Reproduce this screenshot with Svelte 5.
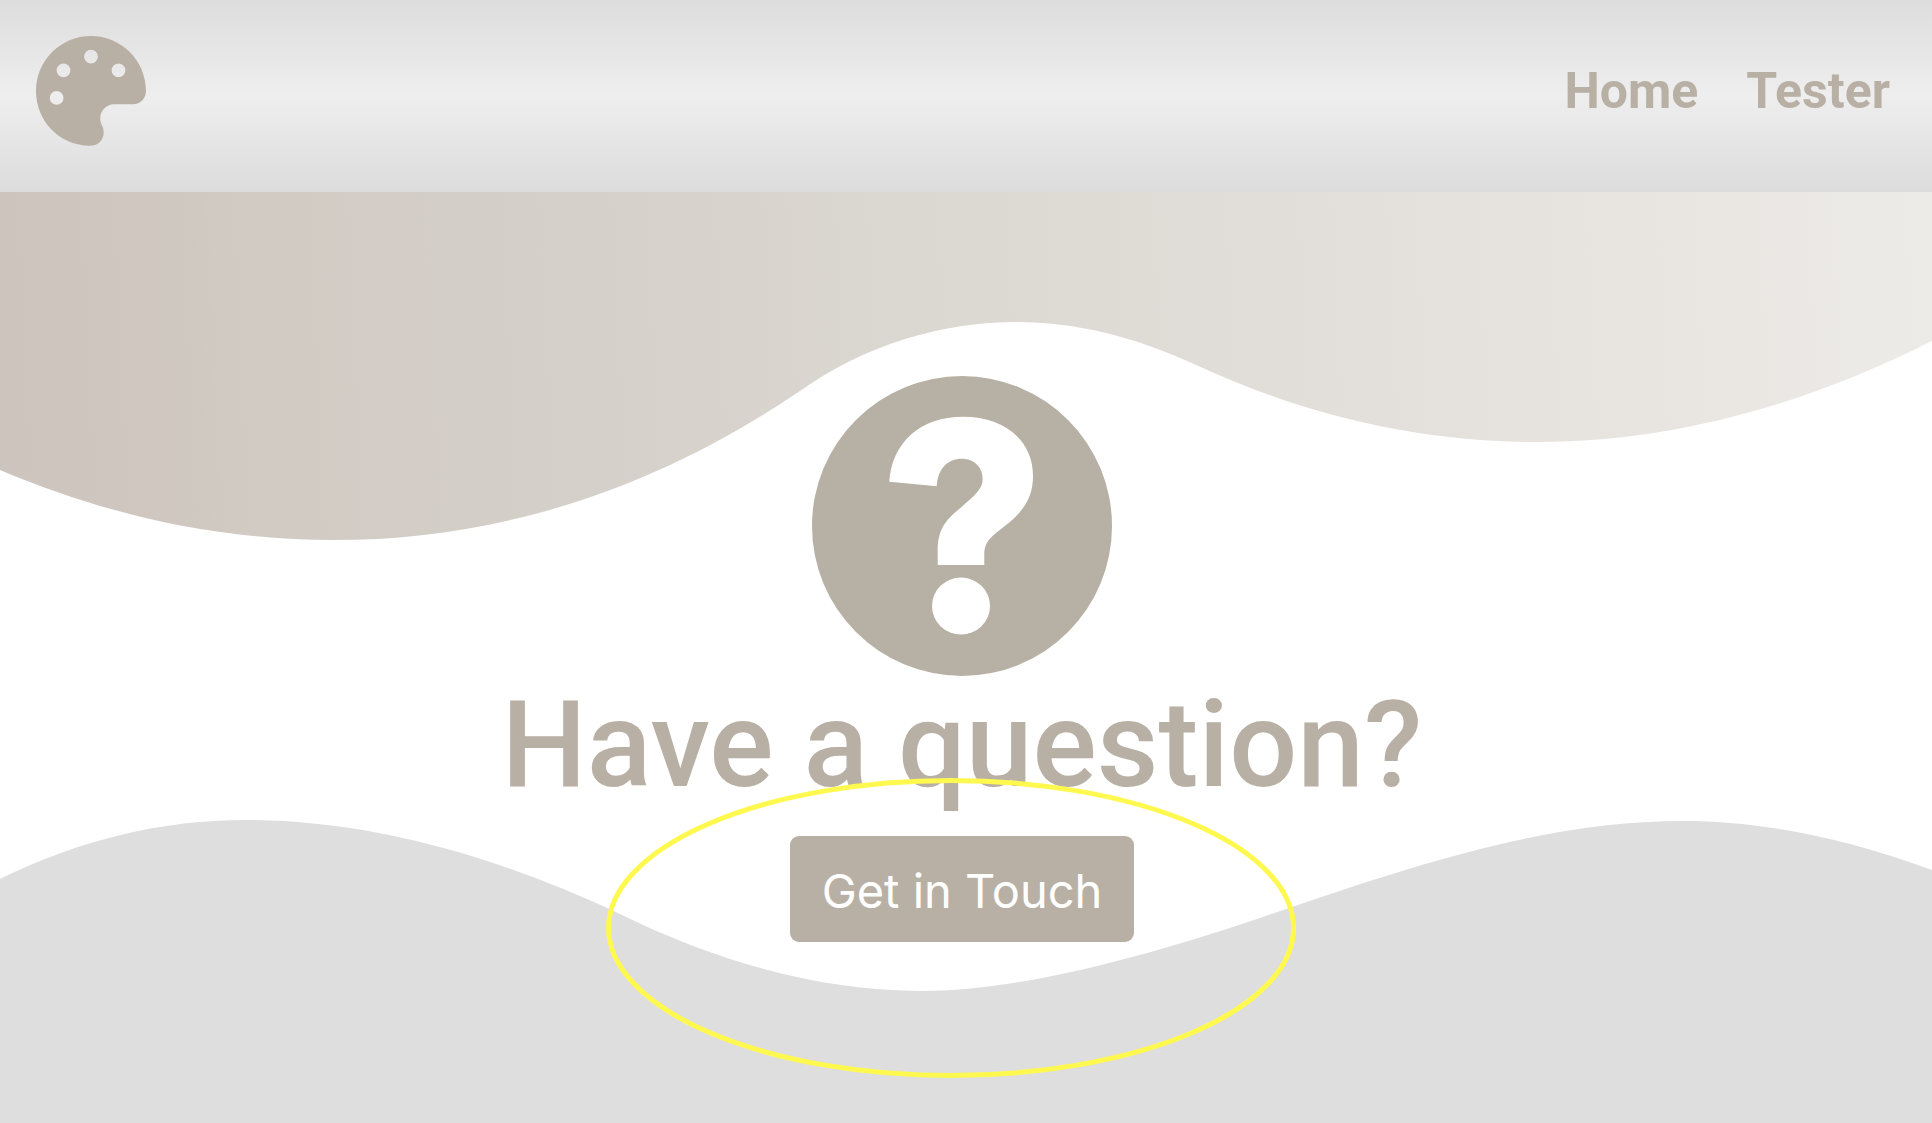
<script>
  const links = ['Home', 'Tester'];
</script>

<div class="page">
  <header>
    <a class="logo" href="#home" aria-label="Home page">
      <svg viewBox="0 0 512 512" aria-hidden="true">
        <path fill="currentColor" d="M512 256C512 290 486 318 452 318H363C327 318 299 348 299 384C299 396 302 406 307 417C312 427 315 437 315 448C315 484 289 511 254 511H244C108 506 0 396 0 256C0 114.6 114.6 0 256 0S512 114.6 512 256zM128 288a32 32 0 1 0 -64 0 32 32 0 1 0 64 0zm0-96a32 32 0 1 0 0-64 32 32 0 1 0 0 64zM288 96a32 32 0 1 0 -64 0 32 32 0 1 0 64 0zm96 96a32 32 0 1 0 0-64 32 32 0 1 0 0 64z" />
      </svg>
    </a>
    <nav>
      {#each links as link}
        <a href="#{link.toLowerCase()}">{link}</a>
      {/each}
    </nav>
  </header>

  <main>
    <svg class="waves" viewBox="0 192 1932 931" preserveAspectRatio="none" aria-hidden="true">
      <defs>
        <linearGradient id="sand" gradientUnits="userSpaceOnUse" x1="0" y1="192" x2="1930" y2="100">
          <stop offset="0" stop-color="#cdc4bd" />
          <stop offset="0.08" stop-color="#cfc7c0" />
          <stop offset="0.11" stop-color="#d0cac3" />
          <stop offset="0.3" stop-color="#d5d0c9" />
          <stop offset="0.5" stop-color="#dcd9d3" />
          <stop offset="0.68" stop-color="#e2dfda" />
          <stop offset="0.75" stop-color="#e5e1dd" />
          <stop offset="0.9" stop-color="#eae7e3" />
          <stop offset="1" stop-color="#edebe8" />
        </linearGradient>
      </defs>
      <path fill="url(#sand)" d="M0 192V470C111 517 222 540 333 540C490 540 647 495 800 391C865 345 941 322 1017 322C1074 322 1133 336 1194 364C1306 416 1420 442 1538 442C1667 442 1799 408 1932 341V192Z" />
      <path fill="#dedede" d="M0 1123V879C81 839 164 820 245 820C361 820 486 851 620 914C724 965 825 991 922 991C1005 991 1118 966 1260 918C1440 855 1560 821 1683 821C1754 821 1837 835 1932 870V1123Z" />
    </svg>

    <div class="content">
      <svg class="question" viewBox="0 0 300 300" aria-hidden="true">
        <circle cx="150" cy="150" r="150" fill="#b7b0a4" />
        <path fill="#fff" d="M77.3 105.7C80 66 109 40.7 151 40.7C192 40.7 221 64 221 100C221 121 212 135 194 149C179 161 172.3 165 172.3 179V189H125.7V175C125.7 155 132 145 149 131.5C163 119 170.7 113 170.7 103C170.7 91 162 82.7 149.7 82.7C136 82.7 126 92 124.7 110.3Z" />
        <ellipse cx="149" cy="230" rx="29" ry="28.5" fill="#fff" />
      </svg>
      <h1>Have a question?</h1>
      <div class="action">
        <button type="button">Get in Touch</button>
        <svg class="ring" viewBox="0 0 690 300" aria-hidden="true">
          <ellipse cx="345" cy="150" rx="342.5" ry="147.5" />
        </svg>
      </div>
    </div>
  </main>
</div>

<style>
  :global(body) {
    margin: 0;
    background: #fff;
  }

  .page {
    min-height: 100vh;
    display: flex;
    flex-direction: column;
    overflow: hidden;
    font-family: Roboto, sans-serif;
    color: #b9b0a5;
  }

  header {
    display: flex;
    align-items: center;
    justify-content: space-between;
    box-sizing: border-box;
    min-height: 192px;
    padding: 36px 42px 46px 36px;
    background: linear-gradient(#dddddd, #efeeee 50%, #dcdcdc);
  }

  .logo {
    color: inherit;
  }

  .logo svg {
    display: block;
    width: 110px;
    height: 110px;
  }

  nav {
    display: flex;
    gap: 48px;
  }

  nav a {
    color: inherit;
    font-size: 50px;
    font-weight: 700;
    line-height: 60px;
    text-decoration: none;
  }

  main {
    position: relative;
    flex: 1;
  }

  .waves {
    position: absolute;
    inset: 0;
    width: 100%;
    height: 100%;
  }

  .content {
    position: relative;
    display: flex;
    flex-direction: column;
    align-items: center;
    padding: 184px 8px 40px 0;
  }

  .question {
    display: block;
    width: 300px;
    height: 300px;
  }

  h1 {
    margin: 0;
    font-size: 120px;
    font-weight: 500;
    line-height: 138px;
    text-align: center;
  }

  .action {
    position: relative;
    margin-top: 22px;
  }

  button {
    display: block;
    padding: 25px 32px 21px;
    border: 0;
    border-radius: 9px;
    background: #b9b0a5;
    color: #fff;
    font-family: Inter, sans-serif;
    font-size: 47px;
    line-height: 60px;
    cursor: pointer;
  }

  /* Highlight ring drawn over the call to action */
  .ring {
    position: absolute;
    top: -58px;
    left: -184px;
    width: 690px;
    height: 300px;
    pointer-events: none;
  }

  .ring ellipse {
    fill: none;
    stroke: #fff94f;
    stroke-width: 5;
  }
</style>
